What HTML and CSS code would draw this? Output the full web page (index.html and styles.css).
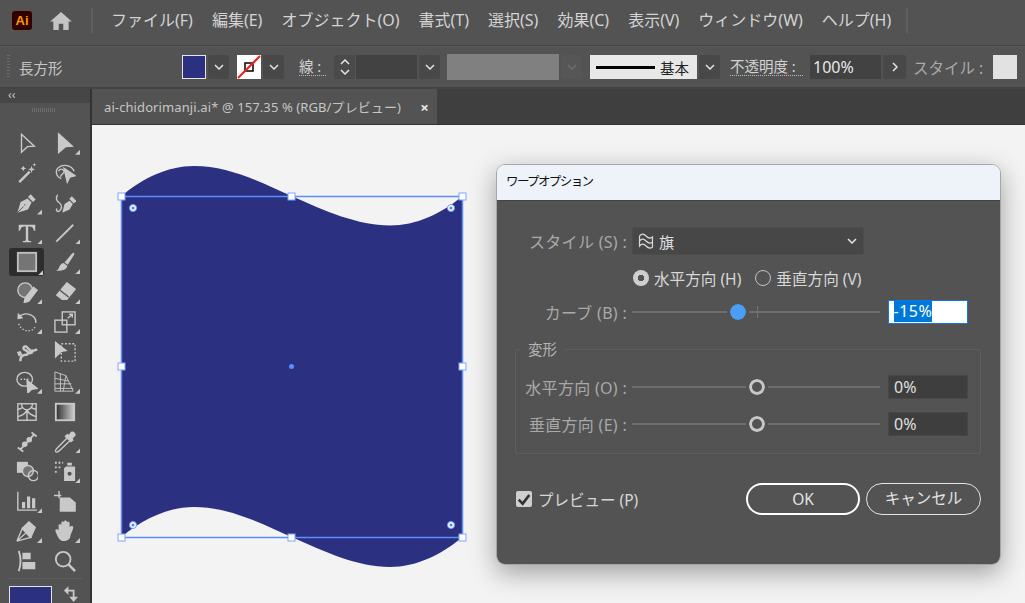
FILE: index.html
```html
<!DOCTYPE html>
<html lang="ja">
  <head>
    <meta charset="UTF-8" />
    <title>ワープオプション</title>
    <link rel="stylesheet" href="styles.css">
  </head>
  <body>
    <header class="menubar">
      <div class="ai-logo">Ai</div>
      <svg class="home" viewBox="0 0 24 20"><path d="M12 0 L24 10.500 L20.500 10.500 L20.500 20 L14.500 20 L14.500 13 L9.500 13 L9.500 20 L3.500 20 L3.500 10.500 L0 10.500 Z"/></svg>
      <div class="sep"></div>
      <nav class="menu">
        <span>ファイル(F)</span>
        <span>編集(E)</span>
        <span>オブジェクト(O)</span>
        <span>書式(T)</span>
        <span>選択(S)</span>
        <span>効果(C)</span>
        <span>表示(V)</span>
        <span>ウィンドウ(W)</span>
        <span>ヘルプ(H)</span>
      </nav>
      <div class="sep sep-right"></div>
    </header>

    <section class="controlbar">
      <div class="grip"></div>
      <span class="ctl-name">長方形</span>
      <div class="swatch swatch-fill"></div>
      <div class="chev-btn"><svg viewBox="0 0 10 6"><path d="M1 1 L5 5 L9 1"/></svg></div>
      <div class="swatch swatch-stroke">
        <svg viewBox="0 0 24 24"><rect x="8" y="8" width="8" height="8"/><path d="M1 23 L23 1"/></svg>
      </div>
      <div class="chev-btn"><svg viewBox="0 0 10 6"><path d="M1 1 L5 5 L9 1"/></svg></div>
      <span class="ctl-label stroke-label">線 :</span>
      <div class="spinner">
        <svg viewBox="0 0 10 6"><path d="M1 5 L5 1 L9 5"/></svg>
        <svg viewBox="0 0 10 6"><path d="M1 1 L5 5 L9 1"/></svg>
      </div>
      <div class="ctl-input stroke-input"></div>
      <div class="chev-btn"><svg viewBox="0 0 10 6"><path d="M1 1 L5 5 L9 1"/></svg></div>
      <div class="var-bar"></div>
      <div class="chev-btn chev-off"><svg viewBox="0 0 10 6"><path d="M1 1 L5 5 L9 1"/></svg></div>
      <div class="brush-preview"><i></i><span>基本</span></div>
      <div class="chev-btn"><svg viewBox="0 0 10 6"><path d="M1 1 L5 5 L9 1"/></svg></div>
      <span class="ctl-label opacity-label">不透明度 :</span>
      <div class="ctl-input opacity-input">100%</div>
      <div class="chev-btn arrow-btn"><svg viewBox="0 0 6 10"><path d="M1 1 L5 5 L1 9"/></svg></div>
      <span class="style-label">スタイル :</span>
      <div class="swatch swatch-style"></div>
    </section>

    <div class="workspace">
      <aside class="toolbar">
        <div class="collapse">‹‹</div>
        <div class="tb-grip"></div>
        <div class="tools">
          <div class="tool"><svg viewBox="0 0 24 24"><path d="M6 2.500 L20 15.500 L12.500 16 L6 22 Z"/></svg></div>
          <div class="tool more"><svg viewBox="0 0 24 24"><path class="f" d="M5 2 L20 15.500 L12.500 16 L5 22.500 Z"/></svg></div>

          <div class="tool"><svg viewBox="0 0 24 24"><path class="thick" d="M3.500 22 L15 10.500"/><path class="f nos" d="M17 4 L18 7 L21 8 L18 9 L17 12 L16 9 L13 8 L16 7 Z M8 4 L9 6 L11 7 L9 8 L8 10 L7 8 L5 7 L7 6 Z M20 1 L20.700 2.500 L22 3 L20.700 3.600 L20 5 L19.400 3.600 L18 3 L19.400 2.500 Z"/></svg></div>
          <div class="tool"><svg viewBox="0 0 24 24"><path d="M8 18 C2 16 1 9 5 6 C10 2 19 3 22 10 M5 10 C6 7 10 7 11 10 C11 13 8 13 7 16"/><path class="f" d="M11 7 L23 15 L17 16.500 L14.500 22 Z"/></svg></div>

          <div class="tool more"><svg viewBox="0 0 24 24"><path class="f nos" d="M1.500 22.500 L5 11 L12.500 7 L17 11.500 L13 19 Z"/><path class="cut" d="M1.500 22.500 L8.500 15.500"/><circle class="hole" cx="9.500" cy="14" r="1.500"/><path class="cap" d="M14.500 4 L20 9.500"/></svg></div>
          <div class="tool"><svg viewBox="0 0 24 24"><path class="f nos" d="M9 22.500 L11.500 13 L17 9.500 L20.500 13 L17 19 Z"/><path class="cap" d="M18 6 L23 11"/><path d="M4 3 C1 7 3 10 6 12 C9 14 9 19 5.500 21 C3 22 1.500 19.500 3.500 18"/></svg></div>

          <div class="tool more"><svg viewBox="0 0 24 24"><path class="f nos" d="M3 3 H21 V9.500 H19.500 C19 6.500 17.500 5 14.500 5 H13.300 V19 C13.300 20.300 14 20.600 16.500 20.600 V22 H7.500 V20.600 C10 20.600 10.700 20.300 10.700 19 V5 H9.500 C6.500 5 5 6.500 4.500 9.500 H3 Z"/></svg></div>
          <div class="tool more"><svg viewBox="0 0 24 24"><path class="thick2" d="M2.500 21.500 L21 3"/></svg></div>

          <div class="tool active more"><svg viewBox="0 0 24 24"><rect class="rect" x="2" y="2" width="20" height="20"/></svg></div>
          <div class="tool more"><svg viewBox="0 0 24 24"><path class="f nos" d="M21 2 C22 2 22.500 3 22 4 L15 15 L11.500 12.500 L19.500 3 Z M10.500 13 L14.500 16 C14 20 10 22 2 21.500 C5 20.500 5 19 6 16.500 C7 14.500 9 13 10.500 13 Z"/></svg></div>

          <div class="tool more"><svg viewBox="0 0 24 24"><circle class="gf" cx="10" cy="10" r="8"/><path class="f" d="M19 7 L23 10 L14 22 L9 23.500 L10 18.500 Z"/></svg></div>
          <div class="tool more"><svg viewBox="0 0 24 24"><path class="f" d="M14 2 L23 9 L14 20 L9 20 L3 15.500 Z"/><path class="cut2" d="M6.500 10 L16 17.500"/></svg></div>

          <div class="tool more"><svg viewBox="0 0 24 24"><path d="M3 7 C6 2.500 14 1.500 19 6 C21.500 8.500 22 11 21.500 13"/><path class="f nos" d="M2 2 L8 8 L1.500 9 Z"/><path class="dots" d="M3 14 C5 20 11 23 17 21 C19 20 20.500 18.500 21.500 16"/></svg></div>
          <div class="tool more"><svg viewBox="0 0 24 24"><rect x="9" y="1" width="14" height="14"/><rect x="1" y="10" width="13" height="13"/><path d="M15 8 L20 3.500 M16.500 3.500 H20 V7"/></svg></div>

          <div class="tool"><svg viewBox="0 0 24 24"><path class="thick" d="M5 22 C4 17 8 15 11 15 C14 15 14 11 10 10 C7 9 8 5 11 6 C13 7 15 14 23 9"/><path class="f nos" d="M1 12 L5 11 L7 15 L3 17 Z M13 12 L18 9 L19 13 L15 15 Z"/></svg></div>
          <div class="tool"><svg viewBox="0 0 24 24"><rect class="dash" x="8" y="3" width="15" height="19"/><path class="f nos" d="M1 0 L15 11 L8.500 12 L1 19 Z"/></svg></div>

          <div class="tool more"><svg viewBox="0 0 24 24"><ellipse cx="9.500" cy="9" rx="8.500" ry="7.500"/><path class="dots2" d="M5 9 H14"/><path class="f" d="M12 10 L23 19 L17 20 L13 24 Z"/></svg></div>
          <div class="tool more"><svg viewBox="0 0 24 24"><path class="thin" d="M1 1 L13 5 L21 22 H1 Z M7 3 V22 M1 8 L16 11 M1 14 H19 M1 19 H21 M13 5 L10 22"/></svg></div>

          <div class="tool"><svg viewBox="0 0 24 24"><rect x="2" y="3" width="20" height="18"/><path d="M2 17 C7 16 10 14 12 10 C14 14 18 16 22 17 M12 10 V21 M6 3 C6 7 8 9 12 10 C15 9 18 7 18 3 M2 9 C4 9 6 8 7.500 7 M22 9 C20 9 18 8 16.500 7"/></svg></div>
          <div class="tool"><svg viewBox="0 0 24 24"><defs><linearGradient id="grad"><stop offset="0" stop-color="#2e2e2e"/><stop offset="1" stop-color="#cfcfcf"/></linearGradient></defs><rect class="gradbox" x="2" y="3" width="20" height="18"/></svg></div>

          <div class="tool"><svg viewBox="0 0 24 24"><path class="thick2" d="M2 18 L8 22.500 M17 1.500 L22.500 6 M4.500 20.500 L19.500 4"/><circle class="f nos" cx="9.500" cy="14.500" r="3"/><circle class="f nos" cx="14.500" cy="9.500" r="3"/></svg></div>
          <div class="tool more"><svg viewBox="0 0 24 24"><path d="M14 8 L3 19 C1.500 21 1 22.500 2.500 23 C4 23.500 5.500 22 7 20.500 L17 11"/><path class="f" d="M19 1.500 C21 0.500 23.500 3 22.500 5 L19.500 8 L20.500 10 L18.500 11.500 L12.500 6 L14.500 4 L16.500 5 Z"/></svg></div>

          <div class="tool"><svg viewBox="0 0 24 24"><rect class="f nos" x="1" y="2" width="12" height="12"/><circle class="g2" cx="13" cy="12" r="6"/><circle cx="19" cy="17" r="5.500"/></svg></div>
          <div class="tool more"><svg viewBox="0 0 24 24"><path class="dotted" d="M1 3 H10 M1 8 H7 M1 13 H4"/><path class="f nos" d="M13 7 H23 V23 H11 V9 Z M14.500 3 H19.500 V6 H14.500 Z"/><circle class="hole" cx="17" cy="15" r="3"/></svg></div>

          <div class="tool more"><svg viewBox="0 0 24 24"><path d="M2 2 V22 H23"/><path class="f nos" d="M6.500 13 H10 V20 H6.500 Z M12 7 H15.500 V20 H12 Z M17.500 9 H21 V20 H17.500 Z"/></svg></div>
          <div class="tool"><svg viewBox="0 0 24 24"><path d="M0 6 H8 M5.500 1 V9"/><path class="f" d="M7 9 H17 L23 14 V23 H7 Z"/></svg></div>

          <div class="tool more"><svg viewBox="0 0 24 24"><path d="M1 23 L11 14 L16 19 Z M1 23 L7 9 L11 14"/><path class="f" d="M14 2 L21 8 L16 19 L7 9 Z"/></svg></div>
          <div class="tool more"><svg viewBox="0 0 24 24"><path class="f nos" d="M5 11 V6 C5 4 8 4 8 6 V3 C8 1 11 1 11 3 V2 C11 0 14 0 14 2 V3 C14 1.500 17 1.500 17 3.500 V8 C18 6 21 6 21 8 C21 11 18 15 17.500 19 C16.500 22 13 23 10 23 C7 23 5 20 3.500 17 L1.500 12 C1 10 3.500 9.500 5 11 Z"/></svg></div>

          <div class="tool"><svg viewBox="0 0 24 24"><path class="thick2" d="M3 1 C5.500 8 5.500 16 3 23"/><path class="f nos" d="M7 3 H16 V10 H7 Z M7 13 H21 V21 H7 Z"/></svg></div>
          <div class="tool"><svg viewBox="0 0 24 24"><circle class="thickc" cx="10" cy="10" r="8"/><path class="thick" d="M16 16 L23 23"/></svg></div>
        </div>
        <div class="tb-line"></div>
        <div class="tb-bottom">
          <div class="big-fill"></div>
          <svg class="swap" viewBox="0 0 16 18"><path d="M1 5 H11 V15"/><path class="f nos" d="M5 0 V10 L0 5 Z M6 12 H16 L11 18 Z"/></svg>
        </div>
      </aside>

      <main class="document">
        <div class="tabs">
          <div class="tab"><span>ai-chidorimanji.ai* @ 157.35 % (RGB/プレビュー)</span><b>×</b></div>
        </div>
        <div class="canvas">
          <svg class="art" viewBox="0 0 933 478">
            <path class="shape" d="M29.500 71 C51 53 76 41 102 41 C136 41 166 56 199.500 71 C233 86 266 100.500 298 100.500 C324 100.500 349 89 370.500 71 L370.500 412 C349 430 324 442 298 442 C266 442 233 427 199.500 412 C166 397 136 382 102 382 C76 382 51 394 29.500 412 Z"/>
            <rect class="bbox" x="29.500" y="71.500" width="341" height="341"/>
            <g class="handles">
              <rect x="26" y="68" width="7" height="7"/><rect x="196" y="68" width="7" height="7"/><rect x="367" y="68" width="7" height="7"/>
              <rect x="26" y="238" width="7" height="7"/><rect x="367" y="238" width="7" height="7"/>
              <rect x="26" y="409" width="7" height="7"/><rect x="196" y="409" width="7" height="7"/><rect x="367" y="409" width="7" height="7"/>
            </g>
            <g class="corners">
              <circle cx="41" cy="83" r="3.500"/><circle cx="359" cy="83" r="3.500"/><circle cx="41" cy="400" r="3.500"/><circle cx="359" cy="400" r="3.500"/>
            </g>
            <g class="corner-dots">
              <circle cx="41" cy="83" r="1.500"/><circle cx="359" cy="83" r="1.500"/><circle cx="41" cy="400" r="1.500"/><circle cx="359" cy="400" r="1.500"/>
            </g>
            <circle class="center" cx="199.500" cy="241.500" r="2.500"/>
          </svg>

          <div class="dialog">
            <div class="dlg-title">ワープオプション</div>
            <div class="dlg-body">
              <div class="row row-style">
                <label>スタイル (S) :</label>
                <div class="select">
                  <svg viewBox="0 0 16 17"><path d="M1.500 3 C4 0 6 1 8 3 C10 5 12 6 14.500 4 V9 C12 11 10 10 8 8 C6 6 4 5 1.500 8 V3 M1.500 8 V13 C4 10 6 11 8 13 C10 15 12 16 14.500 14 V9"/></svg>
                  <span>旗</span>
                  <svg class="sel-chev" viewBox="0 0 10 6"><path d="M1 1 L5 5 L9 1"/></svg>
                </div>
              </div>
              <div class="row row-radio">
                <i class="radio on"></i><span class="r1">水平方向 (H)</span>
                <i class="radio"></i><span>垂直方向 (V)</span>
              </div>
              <div class="row row-curve">
                <label>カーブ (B) :</label>
                <div class="slider">
                  <i class="tick"></i>
                  <i class="thumb blue"></i>
                </div>
                <div class="num num-on"><span>-15%</span></div>
              </div>
              <fieldset class="group">
                <legend>変形</legend>
                <div class="row">
                  <label>水平方向 (O) :</label>
                  <div class="slider"><i class="thumb"></i></div>
                  <div class="num">0%</div>
                </div>
                <div class="row">
                  <label>垂直方向 (E) :</label>
                  <div class="slider"><i class="thumb"></i></div>
                  <div class="num">0%</div>
                </div>
              </fieldset>
              <div class="dlg-foot">
                <div class="check"><svg viewBox="0 0 12 12"><path d="M2 6.500 L5 9.500 L10 3"/></svg></div>
                <span class="check-text">プレビュー (P)</span>
                <div class="btn btn-ok">OK</div>
                <div class="btn">キャンセル</div>
              </div>
            </div>
          </div>
        </div>
      </main>
    </div>
  </body>
</html>
```

FILE: styles.css
```css
* {
  box-sizing: border-box;
}
html, body {
  height: 100%;
}
body {
  margin: 0;
  width: 1025px;
  height: 603px;
  overflow: hidden;
  display: flex;
  flex-direction: column;
  background: #535353;
  color: #d4d4d4;
  font-family: "Noto Sans", "Noto Sans CJK JP", sans-serif;
}

/* barra de menu */
.menubar {
  height: 46px;
  flex: none;
  display: flex;
  align-items: center;
  padding: 0 0 4px 12px;
  border-bottom: 1px solid #414141;
}
.ai-logo {
  width: 20px;
  height: 19px;
  background: #330000;
  border-radius: 3px;
  color: #ff9a00;
  font-family: "Liberation Sans", sans-serif;
  font-size: 13px;
  font-weight: bold;
  line-height: 19px;
  text-align: center;
}
.home {
  width: 22px;
  height: 18px;
  margin-left: 18px;
  fill: #c4c4c4;
}
.sep {
  width: 2px;
  height: 25px;
  margin-left: 19px;
  background: #5f5f5f;
}
.sep-right {
  margin-left: 15px;
}
.menu {
  display: flex;
  gap: 19px;
  margin-left: 18px;
  padding-bottom: 3px;
  font-size: 16px;
  white-space: nowrap;
}

/* barra de control */
.controlbar {
  height: 43px;
  flex: none;
  display: flex;
  align-items: center;
  padding-left: 7px;
  border-top: 1px solid #5c5c5c;
  border-bottom: 2px solid #444;
  font-size: 14.5px;
  white-space: nowrap;
}
.grip {
  width: 3px;
  height: 24px;
  background: repeating-linear-gradient(#6b6b6b 0 1px, transparent 1px 3px);
}
.ctl-name {
  margin-left: 9px;
  width: 163px;
  color: #c6c6c6;
}
.swatch {
  width: 24px;
  height: 24px;
  flex: none;
}
.swatch-fill {
  background: #2b3180;
  border: 1px solid #e6e6e6;
}
.swatch-stroke {
  margin-left: 8px;
  background: #fff;
}
.swatch-stroke svg {
  display: block;
  fill: none;
}
.swatch-stroke rect {
  stroke: #111;
  stroke-width: 1.6;
}
.swatch-stroke path {
  stroke: #f01c1c;
  stroke-width: 2;
}
.chev-btn {
  width: 21px;
  height: 24px;
  flex: none;
  margin-left: 2px;
  display: flex;
  align-items: center;
  justify-content: center;
  background: #484848;
  border-radius: 2px;
}
.chev-btn svg, .spinner svg, .sel-chev {
  width: 10px;
  height: 6px;
  fill: none;
  stroke: #e4e4e4;
  stroke-width: 1.5;
}
.chev-off {
  background: #565656;
}
.chev-off svg {
  stroke: #6d6d6d;
}
.ctl-label {
  border-bottom: 1px dotted #bbb;
  line-height: 17px;
}
.stroke-label {
  margin-left: 15px;
  width: 27px;
}
.spinner {
  width: 21px;
  height: 24px;
  margin-left: 8px;
  display: flex;
  flex-direction: column;
  align-items: center;
  justify-content: center;
  gap: 4px;
  background: #4a4a4a;
  border-radius: 2px;
}
.ctl-input {
  height: 24px;
  flex: none;
  background: #424242;
  color: #e8e8e8;
  line-height: 25px;
}
.stroke-input {
  width: 61px;
  margin-left: 1px;
}
.var-bar {
  width: 112px;
  height: 26px;
  margin-left: 7px;
  background: #808080;
}
.brush-preview {
  width: 107px;
  height: 24px;
  margin-left: 8px;
  padding-left: 6px;
  display: flex;
  align-items: center;
  background: #e8e8e8;
  color: #222;
}
.brush-preview i {
  width: 59px;
  height: 3px;
  background: #000;
}
.brush-preview span {
  margin-left: 5px;
}
.opacity-label {
  margin-left: 10px;
  width: 73px;
}
.opacity-input {
  width: 71px;
  margin-left: 7px;
  padding-left: 3px;
  font-size: 16px;
}
.arrow-btn {
  width: 23px;
}
.arrow-btn svg {
  width: 6px;
  height: 10px;
}
.style-label {
  margin-left: 7px;
  width: 73px;
  color: #a9a9a9;
  font-size: 15.5px;
}
.swatch-style {
  margin-left: 7px;
  background: #e2e2e2;
}

.workspace {
  flex: 1;
  min-height: 0;
  display: flex;
}

/* herramientas */
.toolbar {
  width: 92px;
  flex: none;
  display: flex;
  flex-direction: column;
  border-right: 2px solid #333;
}
.collapse {
  height: 14px;
  flex: none;
  padding-left: 8px;
  background: #464646;
  color: #c8c8c8;
  font-size: 12px;
  line-height: 11px;
}
.tb-grip {
  width: 24px;
  height: 4px;
  flex: none;
  margin: 5px 0 0 32px;
  background: repeating-linear-gradient(90deg, #6c6c6c 0 1px, transparent 1px 2px);
}
.tools {
  display: grid;
  flex: none;
  grid-template-columns: 38px 38px;
  grid-auto-rows: 29.86px;
  margin: 16px 0 0 8px;
}
.tool {
  position: relative;
  display: flex;
  align-items: center;
  justify-content: center;
}
.tool svg {
  width: 22px;
  height: 22px;
  fill: none;
  stroke: #c9c9c9;
  stroke-width: 1.5;
}
.tool.more::after {
  content: "";
  position: absolute;
  right: 4px;
  bottom: 3px;
  width: 5px;
  height: 5px;
  background: #c9c9c9;
  clip-path: polygon(100% 0, 100% 100%, 0 100%);
}
.tool.active {
  background: #2d2d2d;
  border-radius: 3px;
  width: 35px;
  margin: 1px 0 1px 1px;
}
.tool.active::after {
  right: 1px;
  bottom: 1px;
}
.tool .rect {
  fill: #757575;
  stroke: #c0c0c0;
  stroke-width: 2;
}
.f {
  fill: #c9c9c9;
}
.nos {
  stroke: none;
}
.thick {
  stroke-width: 2.600;
}
.thick2 {
  stroke-width: 2;
}
.thickc {
  stroke-width: 2;
}
.thin {
  stroke-width: 1;
}
.cap {
  stroke-width: 4;
}
.cut {
  stroke: #535353;
  stroke-width: 1;
}
.cut2 {
  stroke: #535353;
  stroke-width: 1.5;
}
.gf {
  fill: #757575;
}
.g2 {
  fill: #757575;
}
.hole {
  fill: #535353;
}
.dots {
  stroke-dasharray: 1.500 2;
}
.dots2 {
  stroke-dasharray: 1.500 2;
}
.dash {
  stroke-dasharray: 2 2;
}
.dotted {
  stroke-width: 2;
  stroke-dasharray: 2 2;
}
.gradbox {
  fill: url(#grad);
  stroke: #c9c9c9;
  stroke-width: 2;
}
.tb-line {
  height: 1px;
  flex: none;
  margin: 2px 8px 0;
  background: #5f5f5f;
}
.tb-bottom {
  display: flex;
  flex: none;
  margin: 7px 0 0 9px;
}
.big-fill {
  width: 43px;
  height: 30px;
  flex: none;
  background: #2b3180;
  border: 1px solid #e4e4e4;
}
.swap {
  width: 14px;
  height: 16px;
  margin: 0 0 0 12px;
  fill: none;
  stroke: #c9c9c9;
  stroke-width: 2;
}

/* documento */
.document {
  flex: 1;
  min-width: 0;
  display: flex;
  flex-direction: column;
}
.tabs {
  height: 36px;
  flex: none;
  background: #3f3f3f;
  border-bottom: 1px solid #333;
}
.tab {
  width: 345px;
  height: 35px;
  padding: 0 8px 0 12px;
  display: flex;
  align-items: center;
  justify-content: space-between;
  background: #535353;
  color: #c6c6c6;
  font-size: 13px;
  letter-spacing: 0.1px;
  white-space: nowrap;
}
.tab b {
  color: #e8e8e8;
  font-size: 15px;
}
.canvas {
  position: relative;
  flex: 1;
  background: #f3f3f3;
}
.art {
  position: absolute;
  left: 0;
  top: 0;
  width: 933px;
  height: 478px;
}
.shape {
  fill: #2b3180;
}
.bbox {
  fill: none;
  stroke: #5c8dff;
  stroke-width: 1.5;
}
.handles rect {
  fill: #fff;
  stroke: #7ea4ff;
  stroke-width: 1;
}
.corners circle {
  fill: #fff;
  stroke: #6f9bff;
  stroke-width: 1;
}
.corner-dots circle {
  fill: #4d7fff;
}
.center {
  fill: #5c8dff;
}

/* ventana de dialogo */
.dialog {
  position: absolute;
  left: 404px;
  top: 39px;
  width: 505px;
  height: 401px;
  display: flex;
  flex-direction: column;
  border: 1px solid #a6a6a6;
  border-radius: 9px;
  overflow: hidden;
  box-shadow: 0 8px 26px rgba(0, 0, 0, 0.35);
}
.dlg-title {
  height: 36px;
  flex: none;
  padding-left: 9px;
  background: #eef3fa;
  color: #111;
  font-size: 12.5px;
  letter-spacing: -1.6px;
  line-height: 34px;
  border-bottom: 1px solid #444;
}
.dlg-body {
  flex: 1;
  display: flex;
  flex-direction: column;
  background: #535353;
  font-size: 16px;
  color: #a9a9a9;
}
.row {
  display: flex;
  align-items: center;
}
.row label {
  width: 130px;
  flex: none;
  text-align: right;
  letter-spacing: 0.3px;
  white-space: nowrap;
}
.row-style {
  margin-top: 26px;
  height: 28px;
}
.select {
  width: 232px;
  height: 28px;
  margin-left: 5px;
  padding-left: 5px;
  display: flex;
  align-items: center;
  background: #474747;
  border: 1px solid #4d4d4d;
  border-radius: 2px;
  color: #e0e0e0;
  font-size: 15px;
}
.select svg:first-child {
  width: 16px;
  height: 17px;
  fill: none;
  stroke: #d8d8d8;
  stroke-width: 1.2;
}
.select span {
  margin-left: 5px;
}
.sel-chev {
  margin-left: auto;
  margin-right: 6px;
}
.row-radio {
  margin-top: 11px;
  height: 24px;
  padding-left: 136px;
  color: #d8d8d8;
  font-size: 15.6px;
  white-space: nowrap;
}
.radio {
  width: 16px;
  height: 16px;
  flex: none;
  border-radius: 50%;
  border: 1.500px solid #c4c4c4;
  margin-right: 5px;
}
.radio.on {
  background: radial-gradient(circle, #535353 0 3px, #cfcfcf 3.500px);
  border: 0;
}
.r1 {
  margin-right: 14px;
}
.row-curve {
  margin-top: 10px;
  height: 24px;
}
.slider {
  position: relative;
  width: 248px;
  height: 2px;
  flex: none;
  margin-left: 5px;
  background: #6e6e6e;
}
.thumb {
  position: absolute;
  left: 117px;
  top: -7px;
  width: 16px;
  height: 16px;
  border-radius: 50%;
  background: #535353;
  border: 3px solid #c8c8c8;
  outline: 3px solid #535353;
}
.thumb.blue {
  left: 98px;
  background: #4a9ff5;
  border: 0;
}
.tick {
  position: absolute;
  left: 125px;
  top: -5px;
  width: 1px;
  height: 12px;
  background: #747474;
}
.num {
  width: 80px;
  height: 24px;
  flex: none;
  margin-left: 8px;
  padding-left: 5px;
  background: #3e3e3e;
  border: 1px solid #474747;
  color: #e0e0e0;
  line-height: 23px;
}
.num-on {
  background: #fff;
  border: 1.500px solid #1473e6;
  color: #fff;
  letter-spacing: 0.5px;
  line-height: 21px;
  padding-left: 4.500px;
}
.num-on span {
  display: inline-block;
  background: #0078d7;
}
.group {
  position: relative;
  width: 466px;
  height: 113px;
  flex: none;
  margin: 17px 0 0 18px;
  padding: 0;
  border: 1px solid #5e5e5e;
  border-radius: 3px;
}
.group legend {
  margin-left: 4px;
  padding: 0 8px;
  font-size: 14.5px;
  line-height: 16px;
  color: #b4b4b4;
}
.group .row {
  height: 24px;
  margin: 0 0 13px -19px;
}
.group .row:first-of-type {
  margin-top: 18px;
}
.dlg-foot {
  display: flex;
  align-items: center;
  flex: none;
  margin: 29px 0 0 19px;
  height: 32px;
}
.check {
  width: 16px;
  height: 16px;
  flex: none;
  background: #cfcfcf;
  border-radius: 2px;
}
.check svg {
  display: block;
  fill: none;
  stroke: #333;
  stroke-width: 2;
}
.check-text {
  margin-left: 6px;
  width: 208px;
  color: #d8d8d8;
  font-size: 15.5px;
  white-space: nowrap;
}
.btn {
  width: 115px;
  height: 32px;
  flex: none;
  margin-left: 6px;
  border: 1.500px solid #e4e4e4;
  border-radius: 16px;
  color: #e4e4e4;
  font-size: 15.5px;
  text-align: center;
  line-height: 29px;
}
.btn-ok {
  width: 114px;
  margin-left: 0;
  border: 2px solid #fff;
}
```
